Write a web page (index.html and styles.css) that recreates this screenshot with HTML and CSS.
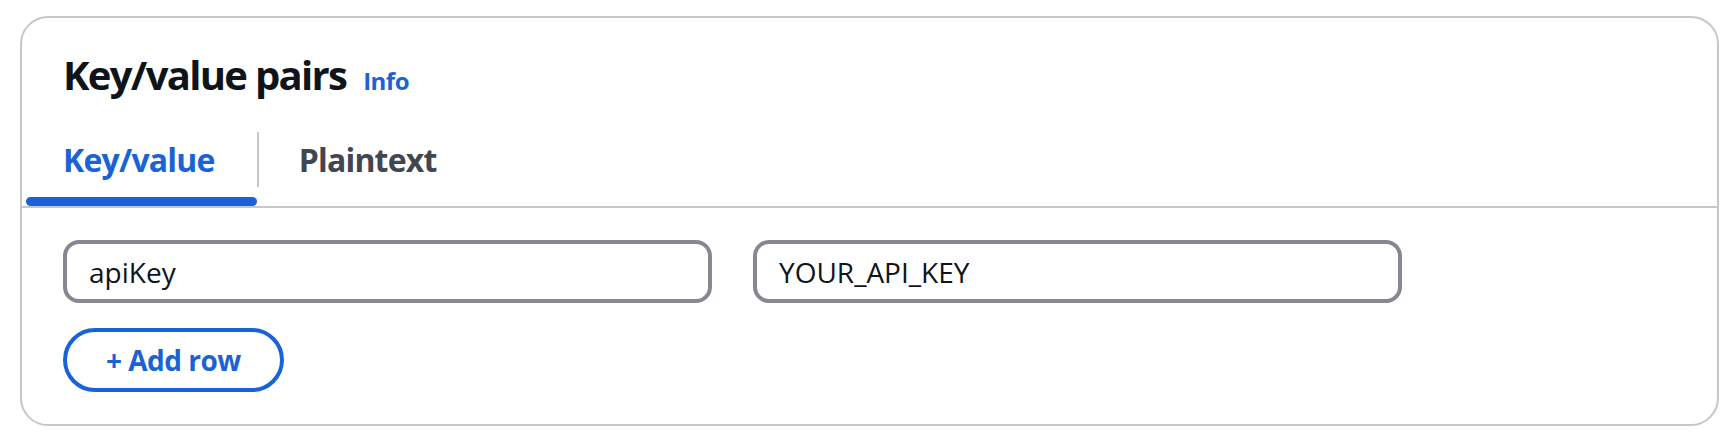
FILE: index.html
```html
<!DOCTYPE html>
<html lang="en">
<head>
<meta charset="utf-8">
<title>Key/value pairs</title>
<link rel="stylesheet" href="styles.css">
</head>
<body>
<div class="page">
  <section class="card">
    <header class="card-header">
      <h2 class="title">Key/value pairs</h2>
      <a class="info-link" href="#">Info</a>
    </header>
    <div class="tabs" role="tablist">
      <button class="tab tab-active" role="tab" aria-selected="true">Key/value</button>
      <span class="tab-sep"></span>
      <button class="tab tab-second" role="tab" aria-selected="false">Plaintext</button>
    </div>
    <div class="card-content">
      <div class="kv-grid">
        <input class="field" type="text" value="apiKey" aria-label="Key">
        <input class="field" type="text" value="YOUR_API_KEY" aria-label="Value">
        <span class="kv-spacer"></span>
      </div>
      <button class="add-btn">+ Add row</button>
    </div>
  </section>
</div>
</body>
</html>
```
FILE: styles.css
```css
* { box-sizing: border-box; }

html, body {
  margin: 0;
  padding: 0;
  background: #ffffff;
}

body {
  font-family: "Open Sans", "Noto Sans", sans-serif;
  color: #0f141a;
}

.page {
  padding: 16px 17px 0 20px;
}

.card {
  border: 2px solid #c6c6cd;
  border-radius: 28px;
  background: #ffffff;
}

.card-header {
  display: flex;
  align-items: baseline;
  gap: 17px;
  padding: 33px 40px 0 41px;
}

.title {
  margin: 0;
  font-size: 40px;
  line-height: 48px;
  font-weight: 700;
  letter-spacing: -1.7px;
  color: #0f141a;
}

.info-link {
  font-size: 24px;
  line-height: 28px;
  font-weight: 700;
  color: #1a63d6;
  text-decoration: none;
  letter-spacing: -0.5px;
}

.tabs {
  display: flex;
  align-items: flex-start;
  margin-top: 15px;
  padding-left: 4px;
  border-bottom: 2px solid #c6c6cd;
}

.tab {
  position: relative;
  border: 0;
  background: none;
  margin: 0;
  padding: 26px 42px 26px 37px;
  font-family: inherit;
  font-size: 32px;
  line-height: 40px;
  font-weight: 700;
  letter-spacing: -0.8px;
  color: #424650;
  cursor: pointer;
}

.tab-second {
  padding-left: 40px;
}

.tab-active {
  color: #1a63d6;
}

.tab-active::after {
  content: "";
  position: absolute;
  left: 0;
  right: 0;
  bottom: 0;
  height: 9px;
  border-radius: 5px;
  background: #1a63d6;
}

.tab-sep {
  width: 2px;
  height: 55px;
  margin-top: 18px;
  background: #c6c6cd;
}

.card-content {
  padding: 32px 40px 32px 41px;
}

.kv-grid {
  display: grid;
  grid-template-columns: 1fr 1fr 234px;
  column-gap: 41px;
}

.field {
  height: 63px;
  width: 100%;
  border: 4px solid #87878f;
  border-radius: 16px;
  padding: 0 22px;
  font-family: inherit;
  font-size: 28px;
  color: #0f141a;
  background: #ffffff;
  outline: none;
}

.add-btn {
  margin-top: 25px;
  height: 64px;
  padding: 0 39px;
  border: 4px solid #1a63d6;
  border-radius: 32px;
  background: #ffffff;
  font-family: inherit;
  font-size: 28px;
  font-weight: 700;
  letter-spacing: -0.5px;
  color: #1a63d6;
  cursor: pointer;
}
```
